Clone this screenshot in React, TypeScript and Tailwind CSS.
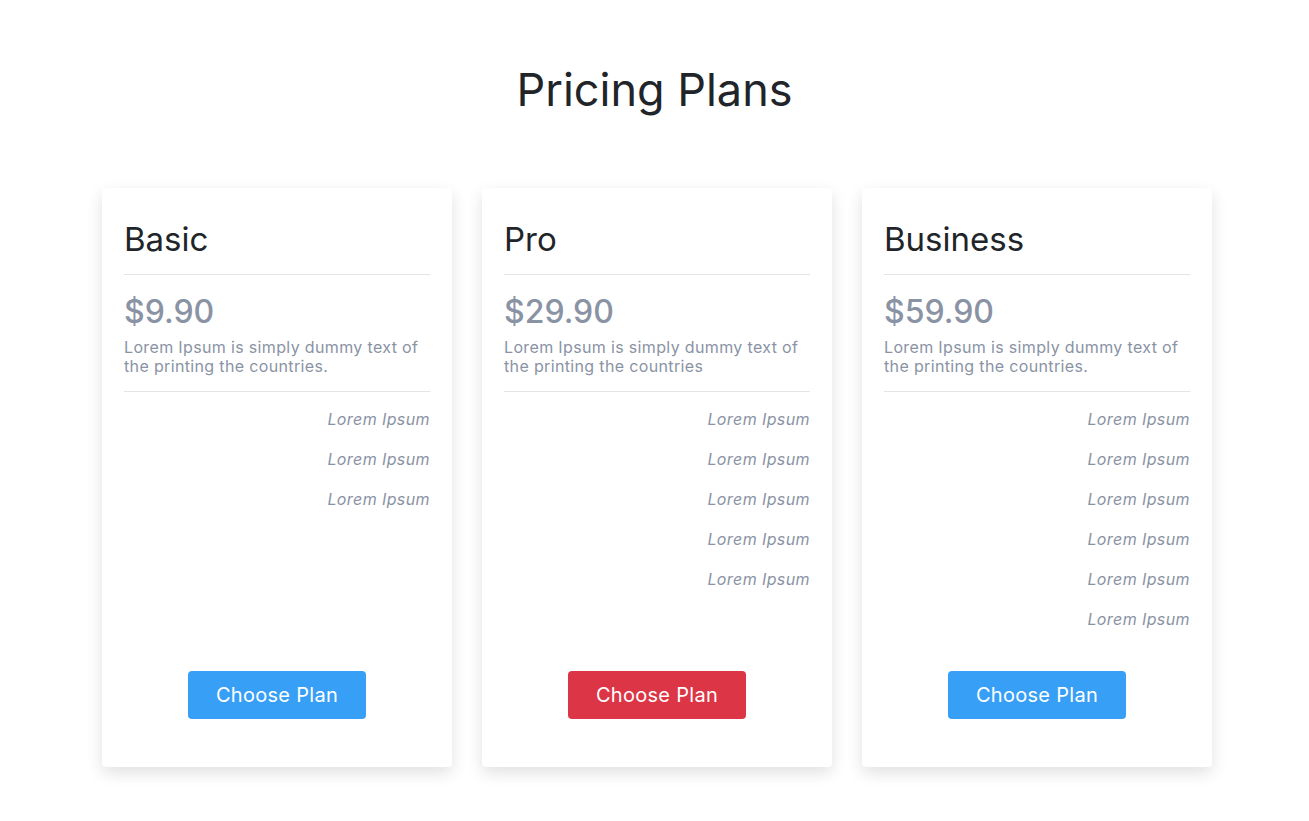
import React from "react";

type Plan = {
  name: string;
  price: string;
  blurb: string;
  features: number;
  featured?: boolean;
};

const plans: Plan[] = [
  { name: "Basic", price: "$9.90", blurb: "Lorem Ipsum is simply dummy text of the printing the countries.", features: 3 },
  { name: "Pro", price: "$29.90", blurb: "Lorem Ipsum is simply dummy text of the printing the countries", features: 5, featured: true },
  { name: "Business", price: "$59.90", blurb: "Lorem Ipsum is simply dummy text of the printing the countries.", features: 6 },
];

function PlanCard({ plan }: { plan: Plan }) {
  return (
    <div className="w-[350px] bg-white rounded-[4px] shadow-[0_6px_16px_rgba(0,0,0,0.12)] px-[22px] pt-[32px] pb-[48px] flex flex-col">
      <h2 className="text-[33px] leading-[38px] text-[#212529] font-normal">{plan.name}</h2>
      <div className="border-t border-[#e3e4e6] mt-[16px]" />
      <div className="text-[32px] leading-[38px] font-medium text-[#8a93a4] mt-[18px]">{plan.price}</div>
      <p className="text-[16px] leading-[19px] tracking-[0.35px] text-[#8a93a4] mt-[7px]">{plan.blurb}</p>
      <div className="border-t border-[#e3e4e6] mt-[15px]" />

      {/* feature list */}
      <ul className="mt-[15px] flex flex-col gap-[16px] text-right italic text-[16px] leading-[24px] tracking-[0.4px] text-[#8a93a4]">
        {Array.from({ length: plan.features }).map((_, i) => (
          <li key={i}>Lorem Ipsum</li>
        ))}
      </ul>

      <div className="flex-1" />
      <div className="flex justify-center mt-[40px]">
        <button
          className={
            "w-[178px] h-[48px] rounded-[4px] text-white text-[20px] tracking-[0.3px] " +
            (plan.featured ? "bg-[#dc3545]" : "bg-[#379ff6]")
          }
        >
          Choose Plan
        </button>
      </div>
    </div>
  );
}

export default function App() {
  return (
    <div className="min-h-[821px] bg-white font-['Inter',sans-serif]">
      <h1 className="text-center text-[45px] leading-[52px] text-[#212529] font-normal pt-[64px]">Pricing Plans</h1>
      <div className="flex justify-center gap-[30px] pl-[5px] mt-[72px]">
        {plans.map((p) => (
          <PlanCard key={p.name} plan={p} />
        ))}
      </div>
    </div>
  );
}
